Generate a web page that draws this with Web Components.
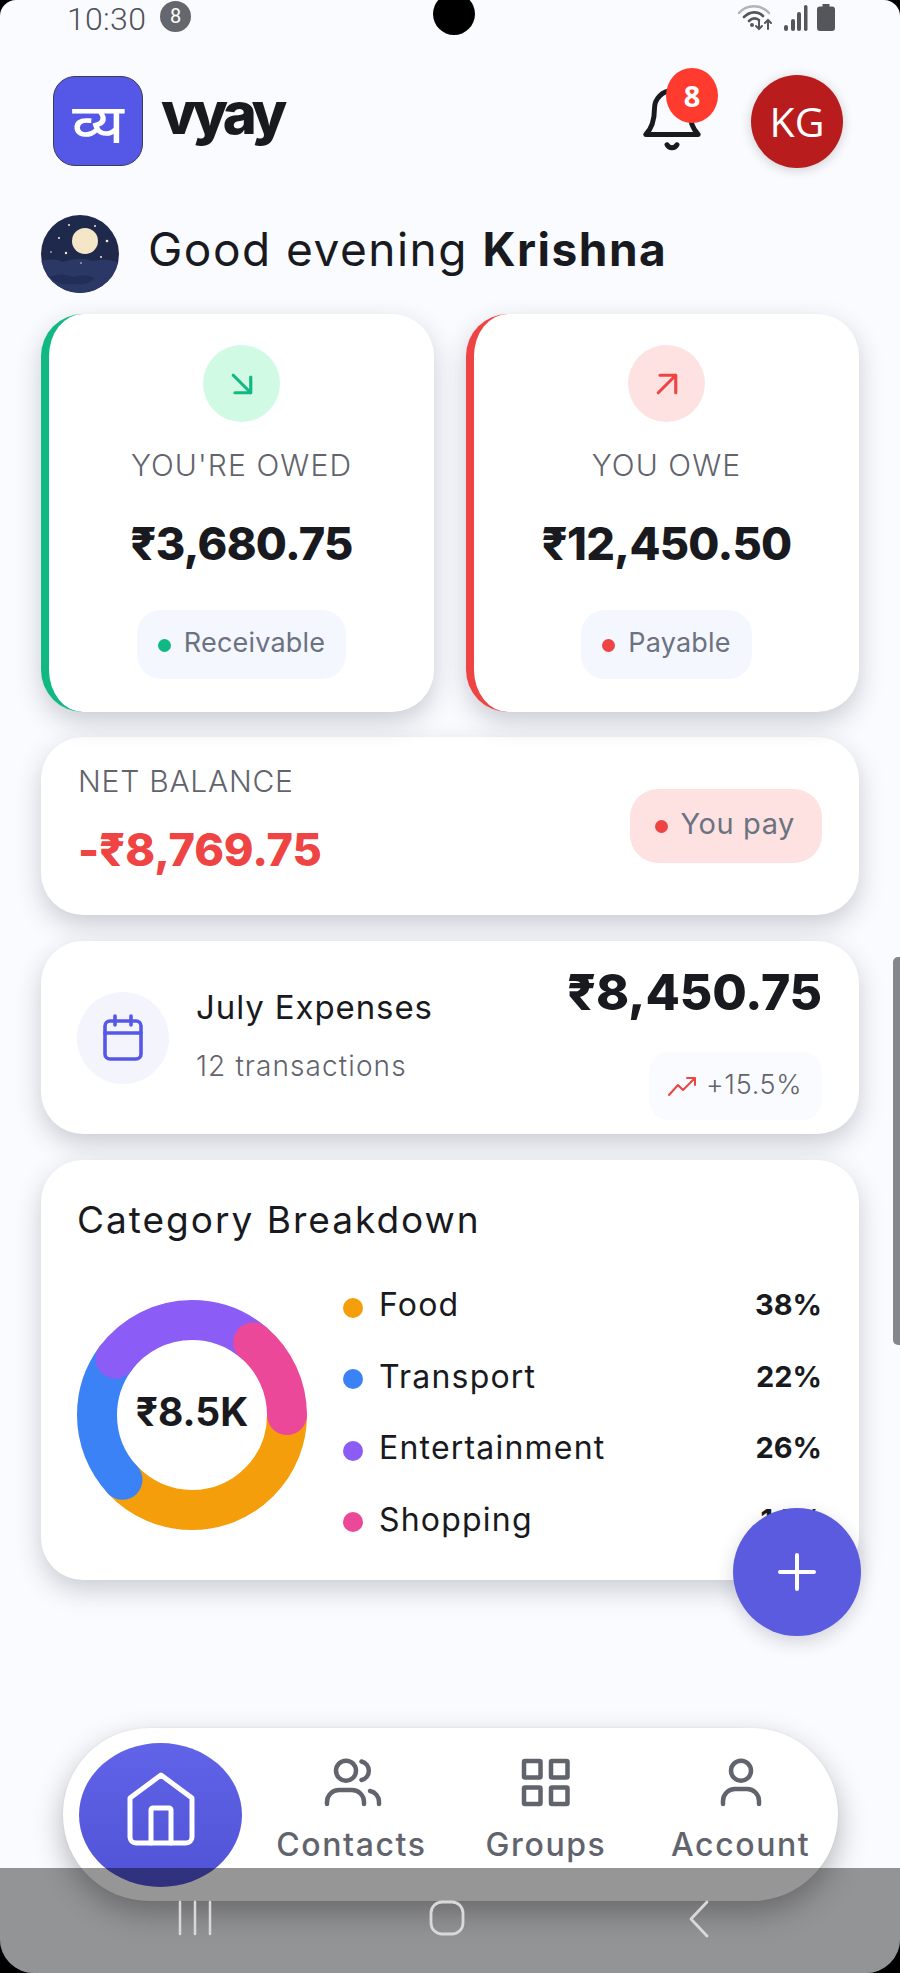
<!DOCTYPE html>
<html lang="en">
<head>
<meta charset="UTF-8">
<title>vyay</title>
<style>
    html, body { margin: 0; padding: 0; background: #000; }
    body { width: 900px; height: 1973px; overflow: hidden; font-family: Inter, "Noto Sans", sans-serif; color: #1a1a22; }
</style>
</head>
<body>
<phone-screen>
    <status-bar slot="top"></status-bar>
    <app-header slot="top"></app-header>
    <greeting-row slot="top">Good evening <b>Krishna</b></greeting-row>

    <balance-card slot="pair" tone="green">
        <span slot="label">YOU'RE OWED</span>
        <span slot="amount">₹3,680.75</span>
        <span slot="chip">Receivable</span>
    </balance-card>
    <balance-card slot="pair" tone="red">
        <span slot="label">YOU OWE</span>
        <span slot="amount">₹12,450.50</span>
        <span slot="chip">Payable</span>
    </balance-card>

    <net-card>
        <span slot="label">NET BALANCE</span>
        <span slot="amount">-₹8,769.75</span>
        <span slot="chip">You pay</span>
    </net-card>

    <expense-card>
        <span slot="title">July Expenses</span>
        <span slot="sub">12 transactions</span>
        <span slot="amount">₹8,450.75</span>
        <span slot="chip">+15.5%</span>
    </expense-card>

    <category-card>
        <span slot="title">Category Breakdown</span>
        <donut-chart slot="chart">₹8.5K</donut-chart>
        <legend-row color="#f59e0b">Food<span slot="pct">38%</span></legend-row>
        <legend-row color="#3b82f6">Transport<span slot="pct">22%</span></legend-row>
        <legend-row color="#8b5cf6">Entertainment<span slot="pct">26%</span></legend-row>
        <legend-row color="#ec4899">Shopping<span slot="pct">14%</span></legend-row>
    </category-card>

    <fab-button slot="overlay"></fab-button>

    <bottom-nav slot="overlay">
        <nav-item>
            <svg slot="icon" style="margin-left:3px" width="60" height="52" viewBox="0 0 60 52" fill="none" stroke="currentColor" stroke-width="4.500" stroke-linecap="round"><circle cx="23" cy="13.700" r="10"/><path d="M38.500 4.500a9.500 9.500 0 0 1 0 18.500"/><path d="M4 47v-2a12 12 0 0 1 12-12h13a12 12 0 0 1 12 12v2"/><path d="M47 34a11 11 0 0 1 9 11v2"/></svg>
            Contacts
        </nav-item>
        <nav-item>
            <svg slot="icon" width="52" height="52" viewBox="0 0 52 52" fill="none" stroke="currentColor" stroke-width="4.500" stroke-linejoin="round"><rect x="4" y="4" width="16.500" height="16.500" rx="1"/><rect x="31" y="4" width="16.500" height="16.500" rx="1"/><rect x="4" y="30.500" width="16.500" height="16.500" rx="1"/><rect x="31" y="30.500" width="16.500" height="16.500" rx="1"/></svg>
            Groups
        </nav-item>
        <nav-item>
            <svg slot="icon" width="48" height="52" viewBox="0 0 48 52" fill="none" stroke="currentColor" stroke-width="4.500" stroke-linecap="round"><circle cx="24" cy="13.700" r="10"/><path d="M6 47v-3a12 12 0 0 1 12-12h12a12 12 0 0 1 12 12v3"/></svg>
            Account
        </nav-item>
    </bottom-nav>

    <gesture-bar slot="overlay"></gesture-bar>
</phone-screen>

<script>
    const CARD_SHADOW = "0 10px 26px rgba(31,41,55,.22)";

    class StatusBar extends HTMLElement {
        constructor() {
            super();
            this.attachShadow({ mode: "open" }).innerHTML = `
            <style>
                :host { display: flex; align-items: flex-start; justify-content: space-between; height: 50px; padding: 0 65px 0 67px; }
                .left { display: flex; align-items: flex-start; gap: 14px; height: 33px; font: 300 32px/33px Roboto, sans-serif; letter-spacing: .3px; color: #4f5158; }
                .time { padding-top: 3px; }
                .num { width: 31px; height: 31px; margin-top: 1px; border-radius: 50%; background: #66676c; color: #fff; font: 400 20px/31px Roboto, sans-serif; letter-spacing: 0; text-align: center; }
                .right { display: flex; gap: 8px; padding-top: 3px; }
                svg { display: block; }
            </style>
            <div class="left"><span class="time">10:30</span><span class="num">8</span></div>
            <div class="right">
                <svg width="38" height="28" viewBox="0 0 38 28" fill="none" stroke-linecap="round">
                    <path d="M2 10C10 1 24 1 32 10" stroke="#b3b4b8" stroke-width="2.400"/>
                    <path d="M7 14C13 8 21 8 26 13" stroke="#55565c" stroke-width="2.600"/>
                    <path d="M12 18c3-3 7-3 10-1" stroke="#55565c" stroke-width="2.600"/>
                    <circle cx="15" cy="22" r="2" fill="#55565c"/>
                    <path d="M22 17v9m-3-3 3 3 3-3M31 26v-9m-3 3 3-3 3 3" stroke="#55565c" stroke-width="2"/>
                </svg>
                <svg width="26" height="28" viewBox="0 0 26 28" fill="#55565c"><rect x="1" y="22" width="4" height="6" rx="2"/><rect x="8" y="16" width="4" height="12" rx="2"/><rect x="14" y="9" width="4" height="19" rx="2"/><rect x="21" y="2" width="3.500" height="26" rx="1.700"/></svg>
                <svg width="18" height="28" viewBox="0 0 18 28" fill="#55565c"><path d="M5.500 1h7v2.500H15a3 3 0 0 1 3 3V25a3 3 0 0 1-3 3H3a3 3 0 0 1-3-3V6.500a3 3 0 0 1 3-3h2.500Z"/></svg>
            </div>`;
        }
    }

    class AppHeader extends HTMLElement {
        constructor() {
            super();
            this.attachShadow({ mode: "open" }).innerHTML = `
            <style>
                :host { display: flex; align-items: flex-start; justify-content: space-between; margin-top: 26px; height: 92px; padding: 0 57px 0 53px; }
                .brand { display: flex; gap: 18px; }
                .logo { width: 88px; height: 88px; border: 1px solid #3a3b55; border-radius: 22px; background: #5558e6; color: #fff; display: flex; align-items: center; justify-content: center; font: 500 55px/1 "Noto Sans", "DejaVu Sans", sans-serif; }
                .name { font: 800 58px/74px Inter, sans-serif; letter-spacing: -4.500px; color: #191a20; }
                .actions { display: flex; gap: 44px; margin-top: -1px; }
                .bell { position: relative; width: 70px; height: 70px; margin-top: 10px; }
                .badge { position: absolute; left: 29px; top: -17px; width: 52px; height: 55px; border-radius: 50%; background: #ff3b30; color: #fff; font: 700 29px/55px "Open Sans", sans-serif; text-align: center; }
                .avatar { width: 92px; height: 93px; border-radius: 50%; background: #b91c1c; color: #fff; font: 500 41px/93px "Open Sans", sans-serif; text-align: center; box-shadow: 0 2px 12px rgba(0,0,0,.18); }
                svg { display: block; }
            </style>
            <div class="brand">
                <div class="logo">व्य</div>
                <div class="name">vyay</div>
            </div>
            <div class="actions">
                <div class="bell">
                    <svg width="70" height="70" viewBox="0 0 24 24" fill="none" stroke="#191a20" stroke-width="1.700" stroke-linecap="round" stroke-linejoin="round"><path d="M6 8c0 4-1 7-3 9h18c-2-2-3-5-3-9a6 6 0 0 0-12 0Z"/><path d="M10.300 20.500a1.940 1.940 0 0 0 3.400 0"/></svg>
                    <span class="badge">8</span>
                </div>
                <div class="avatar">KG</div>
            </div>`;
        }
    }

    class GreetingRow extends HTMLElement {
        constructor() {
            super();
            this.attachShadow({ mode: "open" }).innerHTML = `
            <style>
                :host { display: flex; align-items: center; gap: 29px; margin: 47px 0 21px; height: 78px; padding-left: 41px; font: 400 46px Inter, sans-serif; letter-spacing: 1.500px; color: #191a20; }
                .text { padding-bottom: 10px; }
                svg { display: block; flex: none; }
                ::slotted(b) { font-weight: 700; }
            </style>
            <svg width="78" height="78" viewBox="0 0 78 78">
                <defs><clipPath id="c"><circle cx="39" cy="39" r="39"/></clipPath></defs>
                <g clip-path="url(#c)">
                    <rect width="78" height="78" fill="#1e294b"/>
                    <path d="M0 46q12-4 22 1q14-6 30-1q14-4 26 2v30H0Z" fill="#2b3765"/>
                    <path d="M8 62q14-5 24 0q12-4 22 1q-8 8-20 6q-16 2-26-7Z" fill="#232e58"/>
                    <circle cx="44" cy="26" r="13" fill="#f5e6c8"/>
                    <g fill="#f4ecd8"><circle cx="28" cy="10" r="1"/><circle cx="18" cy="23" r="1"/><circle cx="54" cy="11" r="1"/><circle cx="66" cy="26" r="1.300"/><circle cx="10" cy="37" r=".8"/><circle cx="25" cy="38" r="1.200"/><circle cx="60" cy="42" r="1"/><circle cx="40" cy="48" r=".8"/></g>
                </g>
            </svg>
            <div class="text"><slot></slot></div>`;
        }
    }

    class BalanceCard extends HTMLElement {
        constructor() {
            super();
            const red = this.getAttribute("tone") === "red";
            const color = red ? "#ef4444" : "#10b981";
            const tint = red ? "#fee2e2" : "#d1fae5";
            const arrow = red ? "M7 17 17 7M8 7h9v10" : "M7 7l10 10M17 8v9H8";
            this.attachShadow({ mode: "open" }).innerHTML = `
            <style>
                :host { display: flex; flex-direction: column; align-items: center; box-sizing: border-box; height: 398px; padding-top: 31px; background: #fff; border-left: 8px solid ${color}; border-radius: 42px; box-shadow: ${CARD_SHADOW}; }
                .icon { width: 77px; height: 77px; border-radius: 50%; background: ${tint}; display: flex; align-items: center; justify-content: center; }
                .label { margin-top: 25px; height: 36px; font: 300 30px/36px Inter, sans-serif; letter-spacing: 1.100px; color: #62646d; }
                .amount { margin-top: 32px; height: 58px; font: 800 45px/58px Inter, sans-serif; letter-spacing: -.7px; color: #191a20; }
                .chip { margin-top: 37px; box-sizing: border-box; height: 69px; padding: 0 21px 4px; display: flex; align-items: center; gap: 13px; background: #f5f7ff; border-radius: 24px; font: 400 27px Inter, sans-serif; letter-spacing: .2px; color: #6b7280; }
                .dot { width: 13px; height: 13px; border-radius: 50%; background: ${color}; margin-top: 6px; }
                svg { display: block; }
            </style>
            <div class="icon"><svg width="42" height="42" viewBox="0 0 24 24" fill="none" stroke="${color}" stroke-width="1.800" stroke-linecap="round" stroke-linejoin="round"><path d="${arrow}"/></svg></div>
            <div class="label"><slot name="label"></slot></div>
            <div class="amount"><slot name="amount"></slot></div>
            <div class="chip"><span class="dot"></span><slot name="chip"></slot></div>`;
        }
    }

    class NetCard extends HTMLElement {
        constructor() {
            super();
            this.attachShadow({ mode: "open" }).innerHTML = `
            <style>
                :host { display: flex; justify-content: space-between; box-sizing: border-box; height: 178px; margin-top: 25px; padding: 26px 37px 0 37px; background: #fff; border-radius: 42px; box-shadow: ${CARD_SHADOW}; }
                .label { height: 36px; font: 300 30px/36px Inter, sans-serif; letter-spacing: .75px; color: #62646d; }
                .amount { margin-top: 22px; font: 800 45px/58px Inter, sans-serif; letter-spacing: -.1px; color: #ef4444; }
                .chip { margin-top: 26px; box-sizing: border-box; height: 74px; padding: 0 27px 6px 25px; display: flex; align-items: center; gap: 12px; background: #fee2e2; border-radius: 28px; font: 400 29px Inter, sans-serif; letter-spacing: .6px; color: #6b7280; }
                .dot { width: 13px; height: 13px; border-radius: 50%; background: #ef4444; margin-top: 6px; }
            </style>
            <div><div class="label"><slot name="label"></slot></div><div class="amount"><slot name="amount"></slot></div></div>
            <div class="chip"><span class="dot"></span><slot name="chip"></slot></div>`;
        }
    }

    class ExpenseCard extends HTMLElement {
        constructor() {
            super();
            this.attachShadow({ mode: "open" }).innerHTML = `
            <style>
                :host { display: flex; justify-content: space-between; box-sizing: border-box; height: 193px; margin-top: 26px; padding: 0 37px 0 36px; background: #fff; border-radius: 42px; box-shadow: ${CARD_SHADOW}; }
                .info { display: flex; align-items: center; gap: 27px; }
                .text { padding-bottom: 6px; }
                .cal { width: 92px; height: 92px; border-radius: 50%; background: #f3f4fc; display: flex; align-items: center; justify-content: center; }
                .title { font: 400 33px/40px Inter, sans-serif; letter-spacing: .9px; color: #191a20; }
                .sub { margin-top: 22px; font: 300 28px/34px Inter, sans-serif; letter-spacing: 1.100px; color: #62646d; }
                .side { display: flex; flex-direction: column; align-items: flex-end; }
                .amount { margin-top: 22px; font: 800 50px/58px Inter, sans-serif; letter-spacing: -.2px; color: #191a20; }
                .chip { margin-top: 31px; box-sizing: border-box; height: 68px; width: 173px; padding: 0 0 4px 19px; display: flex; align-items: center; gap: 10px; background: #fafbff; border-radius: 20px; font: 300 27px Inter, sans-serif; letter-spacing: .7px; color: #62646d; }
                .chip svg { margin-top: 4px; }
                svg { display: block; }
            </style>
            <div class="info">
                <div class="cal"><svg width="44" height="50" viewBox="0 0 44 50" fill="none" stroke="#5558e6" stroke-width="3.600" stroke-linecap="round" stroke-linejoin="round"><rect x="4" y="8" width="36" height="38" rx="5"/><path d="M4 20h36M14 3v9M30 3v9"/></svg></div>
                <div class="text"><div class="title"><slot name="title"></slot></div><div class="sub"><slot name="sub"></slot></div></div>
            </div>
            <div class="side">
                <div class="amount"><slot name="amount"></slot></div>
                <div class="chip"><svg width="28" height="20" viewBox="0 0 28 20" fill="none" stroke="#ef4444" stroke-width="2" stroke-linecap="round" stroke-linejoin="round"><path d="M1 19 10 9l5 5L27 2M19 2h8v7"/></svg><slot name="chip"></slot></div>
            </div>`;
        }
    }

    class DonutChart extends HTMLElement {
        constructor() {
            super();
            // order matters, each slice's round cap sits over the one before
            const slices = [["#f59e0b", 38], ["#3b82f6", 22], ["#8b5cf6", 26], ["#ec4899", 14]];
            const r = 95;
            const c = 2 * Math.PI * r;
            let start = 0;
            let circles = "";
            for (const [col, pct] of slices) {
                const len = c * pct / 100;
                circles += `<circle cx="115" cy="115" r="${r}" fill="none" stroke="${col}" stroke-width="40" stroke-linecap="round" stroke-dasharray="${len} ${c - len}" stroke-dashoffset="${-start}"/>`;
                start += len;
            }
            this.attachShadow({ mode: "open" }).innerHTML = `
            <style>
                :host { display: block; position: relative; flex: none; width: 230px; height: 230px; overflow: hidden; margin-top: 31px; }
                svg { display: block; }
                .center { position: absolute; inset: 0 0 8px 0; display: flex; align-items: center; justify-content: center; font: 700 39px Inter, sans-serif; color: #191a20; }
            </style>
            <svg width="230" height="230" viewBox="0 0 230 230">${circles}</svg>
            <div class="center"><slot></slot></div>`;
        }
    }

    class LegendRow extends HTMLElement {
        constructor() {
            super();
            this.attachShadow({ mode: "open" }).innerHTML = `
            <style>
                :host { display: flex; align-items: center; height: 71.500px; font: 400 32px Inter, sans-serif; letter-spacing: 1.200px; color: #191a20; }
                .dot { width: 20px; height: 20px; border-radius: 50%; background: ${this.getAttribute("color")}; margin: 6px 16px 0 0; }
                .name { flex: 1; }
                .pct { font: 700 29px Inter, sans-serif; letter-spacing: 0; }
            </style>
            <span class="dot"></span><span class="name"><slot></slot></span><span class="pct"><slot name="pct"></slot></span>`;
        }
    }

    class CategoryCard extends HTMLElement {
        constructor() {
            super();
            this.attachShadow({ mode: "open" }).innerHTML = `
            <style>
                :host { display: block; box-sizing: border-box; height: 420px; margin-top: 26px; padding: 35px 37px 0 36px; background: #fff; border-radius: 42px; box-shadow: ${CARD_SHADOW}; }
                .title { font: 400 37px/50px Inter, sans-serif; letter-spacing: 2px; color: #191a20; }
                .body { display: flex; gap: 36px; margin-top: 24px; }
                .legend { flex: 1; }
            </style>
            <div class="title"><slot name="title"></slot></div>
            <div class="body"><slot name="chart"></slot><div class="legend"><slot></slot></div></div>`;
        }
    }

    class FabButton extends HTMLElement {
        constructor() {
            super();
            this.attachShadow({ mode: "open" }).innerHTML = `
            <style>
                :host { position: absolute; left: 733px; top: 1508px; width: 128px; height: 128px; border-radius: 50%; background: #5b5be0; display: flex; align-items: center; justify-content: center; box-shadow: 0 6px 18px rgba(31,41,55,.18); }
                svg { display: block; }
            </style>
            <svg width="38" height="38" viewBox="0 0 38 38" stroke="#fff" stroke-width="4" stroke-linecap="round"><path d="M19 2v34M2 19h34"/></svg>`;
        }
    }

    class NavItem extends HTMLElement {
        constructor() {
            super();
            this.attachShadow({ mode: "open" }).innerHTML = `
            <style>
                :host { flex: 1; display: flex; flex-direction: column; align-items: center; padding-top: 14px; color: #62646d; font: 500 32px/40px Inter, sans-serif; letter-spacing: 1.600px; }
                .label { margin-top: 16px; }
                ::slotted(svg) { display: block; height: 52px; }
            </style>
            <slot name="icon"></slot>
            <div class="label"><slot></slot></div>`;
        }
    }

    class BottomNav extends HTMLElement {
        constructor() {
            super();
            this.attachShadow({ mode: "open" }).innerHTML = `
            <style>
                :host { position: absolute; left: 63px; top: 1728px; width: 775px; height: 173px; box-sizing: border-box; padding: 15px 0 0 16px; display: flex; background: #fff; border-radius: 86px; box-shadow: 0 12px 30px rgba(0,0,0,.28), 0 0 2px rgba(0,0,0,.08); }
                .home { flex: none; width: 163px; height: 144px; margin-right: 12px; border-radius: 50%; background: linear-gradient(#6163e8, #5153d6); display: flex; align-items: center; justify-content: center; padding-bottom: 13px; box-sizing: border-box; }
                svg { display: block; }
            </style>
            <div class="home"><svg width="76" height="80" viewBox="0 0 76 80" fill="none" stroke="#fff" stroke-width="5" stroke-linecap="round" stroke-linejoin="round"><path d="M38 6 69 29V68a6 6 0 0 1-6 6H13a6 6 0 0 1-6-6V29Z"/><path d="M28 74V41a2 2 0 0 1 2-2h16a2 2 0 0 1 2 2v33"/></svg></div>
            <slot></slot>`;
        }
    }

    class GestureBar extends HTMLElement {
        constructor() {
            super();
            this.attachShadow({ mode: "open" }).innerHTML = `
            <style>
                :host { position: absolute; left: 0; right: 0; top: 1868px; bottom: 0; box-sizing: border-box; padding: 32px 75px 0 69px; display: grid; grid-template-columns: repeat(3, 1fr); justify-items: center; align-items: start; background: rgba(0,0,0,.41); }
                svg { display: block; }
            </style>
            <svg width="36" height="36" viewBox="0 0 36 36" stroke="#d9d9da" stroke-width="2.500" stroke-linecap="round"><path d="M3 2v32M18 2v32M33 2v32"/></svg>
            <svg width="36" height="36" viewBox="0 0 36 36" fill="none" stroke="#d9d9da" stroke-width="2.800"><rect x="2" y="2" width="32" height="32" rx="11"/></svg>
            <svg width="24" height="38" viewBox="0 0 24 38" fill="none" stroke="#d9d9da" stroke-width="2.800" stroke-linecap="round" stroke-linejoin="round"><path d="M20 2 4 19l16 17"/></svg>`;
        }
    }

    class PhoneScreen extends HTMLElement {
        constructor() {
            super();
            this.attachShadow({ mode: "open" }).innerHTML = `
            <style>
                :host { display: block; position: relative; width: 900px; height: 1973px; overflow: hidden; background: #fafbff; border-radius: 16px 16px 34px 34px; }
                .camera { position: absolute; left: 433px; top: -7px; width: 42px; height: 42px; border-radius: 50%; background: #000; }
                .scroll { position: absolute; right: 0; top: 957px; width: 7px; height: 388px; border-radius: 5px 0 0 5px; background: #85878d; }
                .cards { padding: 0 41px; }
                .pair { display: grid; grid-template-columns: 1fr 1fr; gap: 32px; }
            </style>
            <slot name="top"></slot>
            <div class="cards"><div class="pair"><slot name="pair"></slot></div><slot></slot></div>
            <span class="scroll"></span>
            <span class="camera"></span>
            <slot name="overlay"></slot>`;
        }
    }

    customElements.define("status-bar", StatusBar);
    customElements.define("app-header", AppHeader);
    customElements.define("greeting-row", GreetingRow);
    customElements.define("balance-card", BalanceCard);
    customElements.define("net-card", NetCard);
    customElements.define("expense-card", ExpenseCard);
    customElements.define("donut-chart", DonutChart);
    customElements.define("legend-row", LegendRow);
    customElements.define("category-card", CategoryCard);
    customElements.define("fab-button", FabButton);
    customElements.define("nav-item", NavItem);
    customElements.define("bottom-nav", BottomNav);
    customElements.define("gesture-bar", GestureBar);
    customElements.define("phone-screen", PhoneScreen);
</script>
</body>
</html>
